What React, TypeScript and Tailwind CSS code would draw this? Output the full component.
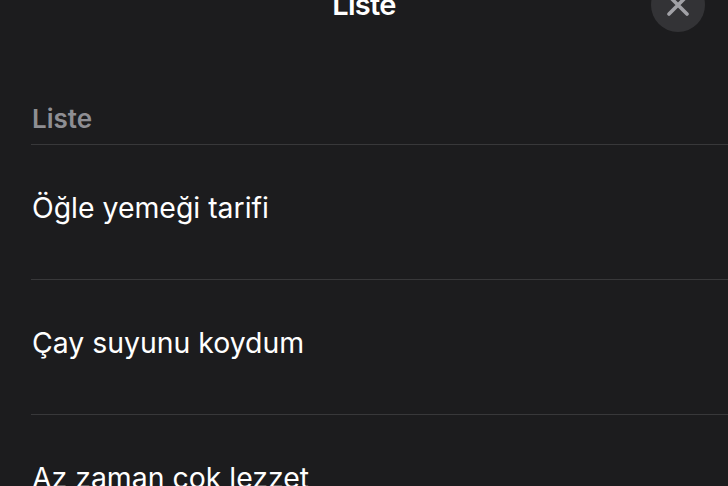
const items = ['Öğle yemeği tarifi', 'Çay suyunu koydum', 'Az zaman çok lezzet']

export default function App() {
  return (
    <main
      className="h-[486px] w-[728px] overflow-hidden bg-[#1c1c1e] text-white"
      style={{ fontFamily: 'Inter, "Noto Sans", sans-serif' }}
    >
      {/* sheet header: title + close button */}
      <header className="relative -mt-[22px] flex h-[54px] items-center justify-center">
        <h1 className="text-[29px] font-semibold tracking-tight">Liste</h1>
        <button className="absolute right-[23px] top-0 flex h-[54px] w-[54px] items-center justify-center rounded-full bg-[#333336]">
          <svg width="24" height="24" viewBox="0 0 24 24" fill="none">
            <path d="M3 3L21 21M21 3L3 21" stroke="#a1a1a6" strokeWidth="3.6" strokeLinecap="round" />
          </svg>
        </button>
      </header>

      <section className="mt-[74px] pl-[31px]">
        <h2 className="pl-px text-[26px] font-semibold leading-none text-[#8e8e93]">Liste</h2>
        <ul className="mt-[12px]">
          {items.map((item) => (
            <li key={item} className="flex h-[135px] items-center border-t border-[#38383a] pb-2">
              <span className="pl-px text-[28.4px]">{item}</span>
            </li>
          ))}
        </ul>
      </section>
    </main>
  )
}
